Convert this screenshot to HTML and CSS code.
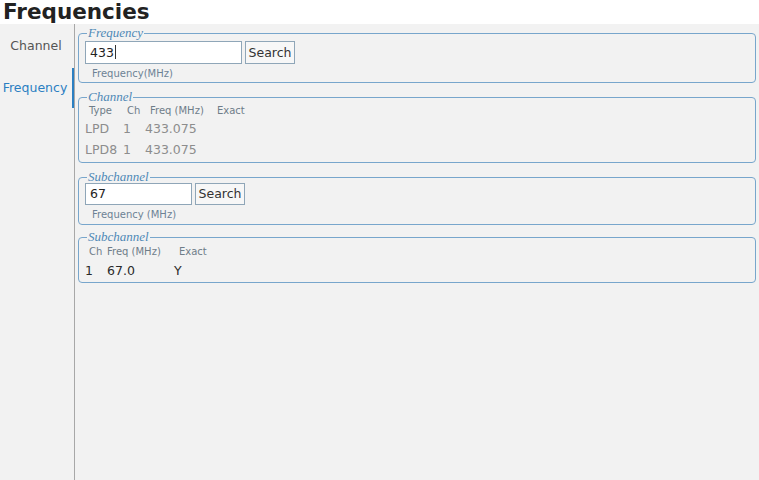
FILE: index.html
```html
<!DOCTYPE html>
<html lang="en">
<head>
    <meta charset="UTF-8">
    <title>Frequencies</title>
    <link rel="stylesheet" href="styles.css">
</head>
<body>
    <div class="title">Frequencies</div>
    <div class="main">
        <div class="tabs">
            <div class="tab">Channel</div>
            <div class="tab active">Frequency</div>
        </div>
        <div class="content">
            <fieldset class="group g1">
                <legend>Frequency</legend>
                <div class="search-row">
                    <div class="field wide">433<span class="caret"></span></div>
                    <button class="btn">Search</button>
                </div>
                <div class="hint">Frequency(MHz)</div>
            </fieldset>

            <fieldset class="group g2">
                <legend>Channel</legend>
                <div class="thead">
                    <span class="c-type">Type</span>
                    <span class="c-ch">Ch</span>
                    <span class="c-freq">Freq (MHz)</span>
                    <span>Exact</span>
                </div>
                <div class="trow muted">
                    <span class="r-type">LPD</span>
                    <span class="r-ch">1</span>
                    <span>433.075</span>
                </div>
                <div class="trow muted">
                    <span class="r-type">LPD8</span>
                    <span class="r-ch">1</span>
                    <span>433.075</span>
                </div>
            </fieldset>

            <fieldset class="group g3">
                <legend>Subchannel</legend>
                <div class="search-row">
                    <div class="field narrow">67</div>
                    <button class="btn">Search</button>
                </div>
                <div class="hint">Frequency (MHz)</div>
            </fieldset>

            <fieldset class="group g4">
                <legend>Subchannel</legend>
                <div class="thead">
                    <span class="s-ch">Ch</span>
                    <span class="s-freq">Freq (MHz)</span>
                    <span>Exact</span>
                </div>
                <div class="trow dark">
                    <span class="sr-ch">1</span>
                    <span class="sr-freq">67.0</span>
                    <span>Y</span>
                </div>
            </fieldset>
        </div>
    </div>
</body>
</html>
```

FILE: styles.css
```css
*{box-sizing: border-box;}
body{
    margin: 0;
    background: #f2f2f2;
    font-family: "DejaVu Sans", sans-serif;
    color: #333;
}
.title{
    height: 24px;
    background: #fff;
    padding-left: 3px;
    font-size: 21.5px;
    font-weight: bold;
    line-height: 23px;
    color: #222;
}
.main{
    display: flex;
    height: 456px;
}
.tabs{
    width: 75px;
    border-right: 1px solid #a8a8a8;
    padding-top: 2px;
}
.tab{
    width: 74px;
    height: 40px;
    margin-bottom: 2px;
    line-height: 40px;
    text-align: center;
    font-size: 12.5px;
    color: #555;
    padding-right: 2px;
}
.tab.active{
    color: #2b7fc2;
    border-right: 2px solid #2b7fc2;
}
.content{
    flex: 1;
    padding: 3px 3px 0 3px;
}
.group{
    margin: 0;
    padding: 0 6px;
    border: 1px solid #78a6cc;
    border-radius: 4px;
    min-width: 0;
}
.group legend{
    padding: 0 1px;
    margin-left: 2px;
    font-family: "Liberation Serif", serif;
    font-style: italic;
    font-size: 13px;
    line-height: 12px;
    height: 12px;
    color: #4f89b6;
}
.g1{ padding-bottom: 2px; }
.g2{ margin-top: 8px; padding-bottom: 2px; }
.g3{ margin-top: 8px; padding-bottom: 3px; }
.g4{ margin-top: 6px; padding-bottom: 1px; }

.search-row{
    display: flex;
    gap: 3px;
}
.g1 .search-row{ margin-top: 2px; }
.field{
    height: 23px;
    background: #fff;
    border: 1px solid #8fa6b8;
    font-size: 12.5px;
    line-height: 21px;
    padding-left: 4px;
    color: #222;
}
.g3 .field, .g3 .btn{ height: 22px; line-height: 20px; }
.wide{ width: 157px; }
.narrow{ width: 107px; }
.caret{
    display: inline-block;
    width: 1px;
    height: 14px;
    background: #333;
    vertical-align: -2px;
    margin-left: 1px;
}
.btn{
    width: 50px;
    height: 23px;
    padding: 0;
    background: #f7f7f7;
    border: 1px solid #8fa6b8;
    font-family: "DejaVu Sans", sans-serif;
    font-size: 12.5px;
    color: #333;
}
.hint{
    margin-top: 4px;
    margin-left: 7px;
    font-size: 10px;
    line-height: 12px;
    color: #6d8295;
}

.thead{
    display: flex;
    margin-top: 3px;
    padding-left: 4px;
    font-size: 10px;
    line-height: 12px;
    color: #6f7d89;
}
.trow{
    display: flex;
    height: 21px;
    line-height: 21px;
    font-size: 12.5px;
}
.g2 .thead{ margin-top: 2px; margin-bottom: 1px; }
.g4 .thead{ margin-bottom: 3px; }
.g4 .trow{ height: 20px; line-height: 20px; }
.muted{ color: #8d8d8d; }
.dark{ color: #2a2a2a; }

.c-type{ width: 38px; }
.c-ch{ width: 23px; }
.c-freq{ width: 67px; }
.r-type{ width: 38px; }
.r-ch{ width: 22px; }

.s-ch{ width: 18px; }
.s-freq{ width: 72px; }
.sr-ch{ width: 22px; }
.sr-freq{ width: 67px; }
```
